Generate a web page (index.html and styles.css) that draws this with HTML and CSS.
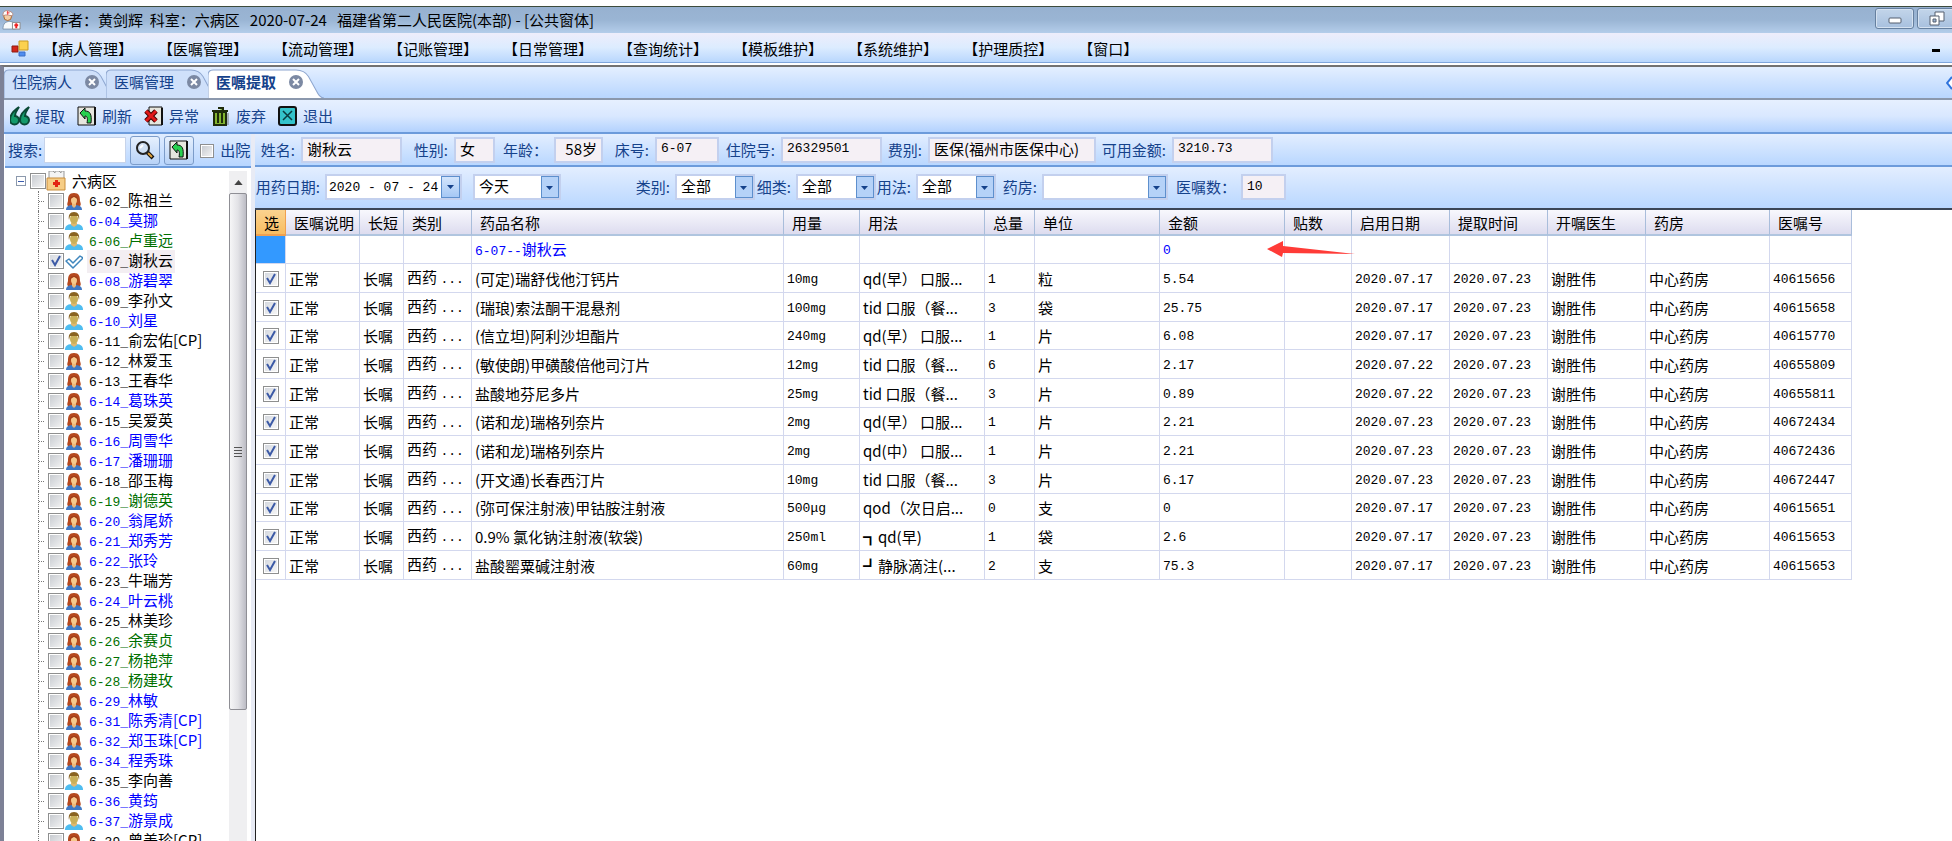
FILE: index.html
```html
<!DOCTYPE html>
<html lang="zh-CN">
<head>
    <meta charset="UTF-8">
    <meta name="viewport" content="width=device-width, initial-scale=1.0">
    <title>医嘱提取</title>
    <link rel="stylesheet" href="styles.css">
</head>
<body>
    <svg class="sprite" aria-hidden="true">
        <symbol id="i-female" viewBox="0 0 18 18">
            <path d="M3 14C2 13 2 12 3 9C3 4 4 1 9 1s6 3 6 8c1 3 1 4 0 5z" fill="#b5491f"/>
            <path d="M1 18c0-4 3-5 8-5s8 1 8 5z" fill="#3f78c4"/>
            <path d="M7 10h4v4l-2 2l-2-2z" fill="#eeb878"/>
            <ellipse cx="9" cy="8" rx="3" ry="4" fill="#f6c98c"/>
            <path d="M5 9c0-5 2-5 4-5s4 0 4 5c-1-3-2-3-4-4c-2 1-3 1-4 4z" fill="#a03d18"/>
        </symbol>
        <symbol id="i-male" viewBox="0 0 18 18">
            <path d="M0 18c0-5 3-6 9-6s9 1 9 6z" fill="#4fbdf0"/>
            <path d="M6 11h6v2l-3 2l-3-2z" fill="#e0b870"/>
            <ellipse cx="9" cy="7" rx="4" ry="5" fill="#c9b05a"/>
            <path d="M4 8c-1-5 1-8 5-8s6 3 5 8l-1-4H5z" fill="#8a6422"/>
        </symbol>
        <symbol id="i-tick" viewBox="0 0 18 18">
            <path d="M1 9l3-2l4 4l7-7l3 2l-10 10z" fill="#fff" stroke="#3f86bd" stroke-width="1.5" stroke-linejoin="round"/>
        </symbol>
        <symbol id="i-ward" viewBox="0 0 20 20">
            <path d="M3 0h4l2 2V0h4l2 2V0h3v9H3z" fill="#f4f4f4" stroke="#999"/>
            <path d="M1 7h18v12H1z" fill="#f6cd86" stroke="#c98e3c"/>
            <path d="M9 9h3v2h2v3h-2v2H9v-2H7v-3h2z" fill="#e32613"/>
        </symbol>
        <symbol id="i-refresh" viewBox="0 0 20 20">
            <path d="M1 1h17v18H1z" fill="#e6e6de" stroke="#111"/>
            <path d="M17 1h2v18h-2z" fill="#111"/>
            <path d="M3 7l5-5v3c5 0 7 3 6 12h-4c1-5 0-7-2-7v3z" fill="#27d04f" stroke="#111"/>
        </symbol>
        <symbol id="i-close" viewBox="0 0 16 16">
            <circle cx="8" cy="8" r="7" fill="#7c89a3"/>
            <path d="M5 5l6 6M11 5l-6 6" stroke="#fff" stroke-width="2"/>
        </symbol>
        <symbol id="i-tab" viewBox="0 0 112 27" preserveAspectRatio="none">
            <path d="M0 27V6Q0 1 5 1H85Q93 1 97 7L105 21Q108 27 112 27" stroke="#8ea6cf"/>
        </symbol>
    </svg>

    <header class="titlebar">
        <svg class="app-icon" viewBox="0 0 22 22">
            <path d="M2 20c0-6 3-8 7-8s6 2 6 8z" fill="#f7fafc" stroke="#7f97b0"/>
            <circle cx="7" cy="7" r="4" fill="#f3cda5" stroke="#a6642c"/>
            <path d="M2 6c0-4 2-6 6-5s5 3 4 5c-4 0-5-2-10 0z" fill="#fff" stroke="#b98b7c"/>
            <path d="M6 3h3M7 1v4" stroke="#e33"/>
            <path d="M12 13h8v7h-8z" fill="#fff" stroke="#888"/>
            <path d="M14 16h4M16 14v5" stroke="#e22" stroke-width="2"/>
        </svg>
        <h1>操作者：黄剑辉&nbsp; 科室：六病区&nbsp;&nbsp; 2020-07-24&nbsp;&nbsp; 福建省第二人民医院(本部) - [公共窗体]</h1>
        <div class="window-buttons">
            <button type="button" aria-label="最小化"><svg width="16" height="16" viewBox="0 0 16 16"><rect x="2" y="7" width="12" height="5" rx="1" fill="#fff" stroke="#555e6e"/></svg></button>
            <button type="button" aria-label="还原"><svg width="16" height="16" viewBox="0 0 16 16"><path d="M6 1h9v9H6z" fill="#fff" stroke="#555e6e"/><path d="M1 5h9v9H1z" fill="#fff" stroke="#555e6e"/><path d="M4 8h3v3H4z" fill="#9db6d4" stroke="#555e6e"/></svg></button>
        </div>
    </header>

    <nav class="menubar">
        <svg class="menu-icon" width="18" height="18" viewBox="0 0 18 18">
            <path d="M1 6h6v6H1z" fill="#d3261a" stroke="#8d1d13"/>
            <path d="M8 1h9v9H8z" fill="#fbd14e" stroke="#c99a22"/>
            <path d="M8 12h6v4H8z" fill="#4f8df0" stroke="#3c6fc4"/>
        </svg>
        <a href="#">【病人管理】</a>
        <a href="#">【医嘱管理】</a>
        <a href="#">【流动管理】</a>
        <a href="#">【记账管理】</a>
        <a href="#">【日常管理】</a>
        <a href="#">【查询统计】</a>
        <a href="#">【模板维护】</a>
        <a href="#">【系统维护】</a>
        <a href="#">【护理质控】</a>
        <a href="#">【窗口】</a>
        <span class="mdi-min"></span>
    </nav>

    <div class="workspace">
        <div class="tabs">
            <div class="tab"><svg class="tab-shape"><use href="#i-tab"/></svg><span>住院病人</span><svg class="tab-close"><use href="#i-close"/></svg></div>
            <div class="tab"><svg class="tab-shape"><use href="#i-tab"/></svg><span>医嘱管理</span><svg class="tab-close"><use href="#i-close"/></svg></div>
            <div class="tab active"><svg class="tab-shape"><use href="#i-tab"/></svg><span>医嘱提取</span><svg class="tab-close"><use href="#i-close"/></svg></div>
            <svg class="tab-scroll" width="6" height="14" viewBox="0 0 6 14"><path d="M6 1L1 7l5 6" fill="#fff" stroke="#2f74dd" stroke-width="2"/></svg>
        </div>

        <div class="toolbar">
            <button type="button"><svg viewBox="0 0 20 20"><path d="M9 1C3 5 0 9 0 14c0 6 9 6 9 0c0-3-3-4-4-4c0-4 2-6 4-9zM19 1c-6 4-9 8-9 13c0 6 9 6 9 0c0-3-3-4-4-4c0-4 2-6 4-9z" fill="#149a6b" stroke="#0b4a36" stroke-width="2"/></svg>提取</button>
            <button type="button"><svg><use href="#i-refresh"/></svg>刷新</button>
            <button type="button"><svg viewBox="0 0 20 20"><path d="M5 1h13v18H5z" fill="#e6e6de" stroke="#111"/><path d="M17 2h2v17h-2z" fill="#111"/><path d="M2 5l10 10M12 5L2 15" stroke="#400" stroke-width="5"/><path d="M2 5l10 10M12 5L2 15" stroke="#e01818" stroke-width="3"/></svg>异常</button>
            <button type="button"><svg viewBox="0 0 20 20"><path d="M1 5h16M7 2h5v3M3 6h12v13H3z" fill="#82b430" stroke="#1f2c0b" stroke-width="2"/><path d="M7 7v10M11 7v10" stroke="#1f2c0b" stroke-width="2"/><path d="M17 7v12" stroke="#777"/></svg>废弃</button>
            <button type="button"><svg viewBox="0 0 20 20"><rect x="1" y="1" width="17" height="18" rx="2" fill="#34c3cb" stroke="#111" stroke-width="2"/><path d="M5 5l9 9M14 5l-9 9" stroke="#0a3b40" stroke-width="1.5"/></svg>退出</button>
        </div>

        <main>
            <aside>
                <div class="search-row">
                    <label for="search">搜索:</label>
                    <input type="text" id="search">
                    <button type="button" aria-label="查找"><svg viewBox="0 0 20 20"><path d="M12 12l6 6" stroke="#111" stroke-width="4"/><path d="M13 13l4 4" stroke="#e2a33b" stroke-width="2"/><circle cx="8" cy="8" r="6" fill="#cfdff2" stroke="#222" stroke-width="2"/><path d="M5 8l3-3" stroke="#fff" stroke-width="2"/></svg></button>
                    <button type="button" aria-label="刷新"><svg><use href="#i-refresh"/></svg></button>
                    <input type="checkbox" id="discharged">
                    <label for="discharged">出院</label>
                </div>
                <div class="tree-wrap">
                    <div class="tree">
                        <div class="tree-root">
                            <button type="button" class="collapse" aria-label="折叠"></button>
                            <input type="checkbox" id="ward">
                            <svg><use href="#i-ward"/></svg>
                            <label for="ward">六病区</label>
                        </div>
                        <ul id="patientList"></ul>
                    </div>
                    <div class="scrollbar">
                        <span class="scroll-up"></span>
                        <span class="scroll-thumb"></span>
                        <span class="scroll-rest"></span>
                    </div>
                </div>
            </aside>

            <section class="content">
                <div class="info-row">
                    <label for="pName">姓名:</label><input type="text" id="pName" value="谢秋云" readonly>
                    <label for="pSex">性别:</label><input type="text" id="pSex" value="女" readonly>
                    <label for="pAge">年龄：</label><input type="text" id="pAge" class="right" value="58岁" readonly>
                    <label for="pBed">床号:</label><input type="text" id="pBed" class="num" value="6-07" readonly>
                    <label for="pNo">住院号:</label><input type="text" id="pNo" class="num" value="26329501" readonly>
                    <label for="pFee">费别:</label><input type="text" id="pFee" value="医保(福州市医保中心)" readonly>
                    <label for="pMoney">可用金额:</label><input type="text" id="pMoney" class="num" value="3210.73" readonly>
                </div>
                <div class="filter-row">
                    <label for="useDate">用药日期:</label>
                    <div class="date-box">
                        <input type="text" id="useDate" class="num" value="2020 - 07 - 24">
                        <button type="button" aria-label="选择日期"></button>
                    </div>
                    <select class="day" aria-label="日期范围"><option>今天</option></select>
                    <label for="fType">类别:</label><select id="fType"><option>全部</option></select>
                    <label for="fSub">细类:</label><select id="fSub"><option>全部</option></select>
                    <label for="fUsage">用法:</label><select id="fUsage"><option>全部</option></select>
                    <label for="fPharmacy">药房:</label><select id="fPharmacy"><option></option></select>
                    <label for="fCount">医嘱数：</label><input type="text" id="fCount" class="num" value="10" readonly>
                </div>
                <div class="grid">
                    <table>
                        <colgroup>
                            <col class="c-check"><col class="c-state"><col class="c-term"><col class="c-type">
                            <col class="c-drug"><col class="c-dose"><col class="c-usage"><col class="c-total">
                            <col class="c-unit"><col class="c-money"><col class="c-paste"><col class="c-date">
                            <col class="c-date"><col class="c-date"><col class="c-pharmacy"><col class="c-order">
                        </colgroup>
                        <thead>
                            <tr>
                                <th>选</th><th>医嘱说明</th><th>长短</th><th>类别</th><th>药品名称</th><th>用量</th><th>用法</th><th>总量</th>
                                <th>单位</th><th>金额</th><th>贴数</th><th>启用日期</th><th>提取时间</th><th>开嘱医生</th><th>药房</th><th>医嘱号</th>
                            </tr>
                        </thead>
                        <tbody id="orderList">
                            <tr class="group">
                                <td></td><td></td><td></td><td></td><td><span class="num">6-07--</span>谢秋云</td><td></td><td></td><td></td>
                                <td></td><td class="num">0</td><td></td><td></td><td></td><td></td><td></td><td></td>
                            </tr>
                        </tbody>
                    </table>
                    <svg class="arrow" width="88" height="18" viewBox="0 0 88 18"><path d="M0 8L16 0V5L88 13L16 12L15 16z" fill="#ff3b37"/></svg>
                </div>
            </section>
        </main>
    </div>

    <script>
        // [床号, 姓名, 性别, 颜色]
        const patients = [
            ['6-02', '陈祖兰', 'f', ''],
            ['6-04', '莫挪', 'm', 'blue'],
            ['6-06', '卢重远', 'm', 'green'],
            ['6-07', '谢秋云', 'f', 'selected'],
            ['6-08', '游碧翠', 'f', 'blue'],
            ['6-09', '李孙文', 'm', ''],
            ['6-10', '刘星', 'm', 'blue'],
            ['6-11', '俞宏佑[CP]', 'm', ''],
            ['6-12', '林爱玉', 'f', ''],
            ['6-13', '王春华', 'f', ''],
            ['6-14', '葛珠英', 'f', 'blue'],
            ['6-15', '吴爱英', 'f', ''],
            ['6-16', '周雪华', 'f', 'blue'],
            ['6-17', '潘珊珊', 'f', 'blue'],
            ['6-18', '邵玉梅', 'f', ''],
            ['6-19', '谢德英', 'f', 'green'],
            ['6-20', '翁尾娇', 'f', 'blue'],
            ['6-21', '郑秀芳', 'f', 'blue'],
            ['6-22', '张玲', 'f', 'blue'],
            ['6-23', '牛瑞芳', 'f', ''],
            ['6-24', '叶云桃', 'f', 'blue'],
            ['6-25', '林美珍', 'f', ''],
            ['6-26', '余赛贞', 'f', 'green'],
            ['6-27', '杨艳萍', 'f', 'green'],
            ['6-28', '杨建玫', 'f', 'green'],
            ['6-29', '林敏', 'f', 'blue'],
            ['6-31', '陈秀清[CP]', 'f', 'blue'],
            ['6-32', '郑玉珠[CP]', 'f', 'blue'],
            ['6-34', '程秀珠', 'f', 'blue'],
            ['6-35', '李向善', 'm', ''],
            ['6-36', '黄筠', 'f', 'blue'],
            ['6-37', '游景成', 'm', 'blue'],
            ['6-39', '曾美珍[CP]', 'f', '']
        ];

        const orders = [
            ['(可定)瑞舒伐他汀钙片', '10mg', 'qd(早） 口服...', '1', '粒', '5.54', '2020.07.17', '40615656'],
            ['(瑞琅)索法酮干混悬剂', '100mg', 'tid 口服（餐...', '3', '袋', '25.75', '2020.07.17', '40615658'],
            ['(信立坦)阿利沙坦酯片', '240mg', 'qd(早） 口服...', '1', '片', '6.08', '2020.07.17', '40615770'],
            ['(敏使朗)甲磺酸倍他司汀片', '12mg', 'tid 口服（餐...', '6', '片', '2.17', '2020.07.22', '40655809'],
            ['盐酸地芬尼多片', '25mg', 'tid 口服（餐...', '3', '片', '0.89', '2020.07.22', '40655811'],
            ['(诺和龙)瑞格列奈片', '2mg', 'qd(早） 口服...', '1', '片', '2.21', '2020.07.23', '40672434'],
            ['(诺和龙)瑞格列奈片', '2mg', 'qd(中） 口服...', '1', '片', '2.21', '2020.07.23', '40672436'],
            ['(开文通)长春西汀片', '10mg', 'tid 口服（餐...', '3', '片', '6.17', '2020.07.23', '40672447'],
            ['(弥可保注射液)甲钴胺注射液', '500μg', 'qod（次日启...', '0', '支', '0', '2020.07.17', '40615651'],
            ['0.9% 氯化钠注射液(软袋)', '250ml', '┓qd(早)', '1', '袋', '2.6', '2020.07.17', '40615653'],
            ['盐酸罂粟碱注射液', '60mg', '┛静脉滴注(...', '2', '支', '75.3', '2020.07.17', '40615653']
        ];

        const patientList = document.getElementById('patientList');
        patients.forEach(([bed, name, sex, state]) => {
            const selected = state === 'selected';
            const icon = selected ? 'i-tick' : (sex === 'f' ? 'i-female' : 'i-male');
            const li = document.createElement('li');
            li.className = state;
            li.innerHTML = `<span class="branch"></span>
                <input type="checkbox" id="bed${bed}" ${selected ? 'checked' : ''}>
                <svg><use href="#${icon}"/></svg>
                <label for="bed${bed}"><span class="num">${bed}_</span>${name}</label>`;
            patientList.appendChild(li);
        });

        const orderList = document.getElementById('orderList');
        orders.forEach(([drug, dose, usage, total, unit, money, start, no]) => {
            const tr = document.createElement('tr');
            tr.innerHTML = `<td class="check"><input type="checkbox" aria-label="${drug}" checked></td>
                <td>正常</td><td>长嘱</td><td>西药 <span class="num">...</span></td><td>${drug}</td><td class="num">${dose}</td>
                <td>${usage}</td><td class="num">${total}</td><td>${unit}</td><td class="num">${money}</td><td></td>
                <td class="num">${start}</td><td class="num">2020.07.23</td><td>谢胜伟</td><td>中心药房</td><td class="num">${no}</td>`;
            orderList.appendChild(tr);
        });
    </script>
</body>
</html>
```
FILE: styles.css
```css
* {
    box-sizing: border-box;
}
body {
    margin: 0;
    padding-top: 6px;
    height: 100vh;
    display: flex;
    flex-direction: column;
    overflow: hidden;
    background-color: #fff;
    color: #000;
    font-family: "Noto Sans CJK SC", sans-serif;
    font-size: 15px;
    line-height: 20px;
}
input, select, button {
    font: inherit;
    color: inherit;
    margin: 0;
}
.num, input.num {
    font-family: "Liberation Mono", "Noto Sans CJK SC", monospace;
    font-size: 13px;
}
.sprite {
    display: none;
}

/* 标题栏 */
.titlebar {
    display: flex;
    align-items: center;
    height: 27px;
    padding-left: 1px;
    border-top: 1px solid #3d4b3c;
    background: linear-gradient(#97b1d0, #9ab5d4 50%, #b4cdea);
}
.app-icon {
    width: 21px;
    height: 21px;
}
.titlebar h1 {
    margin: 0 0 0 16px;
    font-size: 15px;
    font-weight: normal;
}
.window-buttons {
    display: flex;
    gap: 3px;
    margin-left: auto;
    margin-top: 1px;
    align-self: flex-start;
    margin-right: -4px;
}
.window-buttons button {
    display: flex;
    align-items: center;
    justify-content: center;
    width: 39px;
    height: 21px;
    padding: 0;
    border: 1px solid #66809f;
    border-radius: 3px;
    background: linear-gradient(#c3d5ea, #a7c0de);
    box-shadow: inset 0 0 0 1px #d5e2f1;
}

/* 菜单栏 */
.menubar {
    display: flex;
    align-items: center;
    gap: 25px;
    height: 30px;
    padding: 2px 12px 0 11px;
    border-bottom: 1px solid #7fa6dc;
    background: linear-gradient(#eeedfb, #dcecff 50%, #b9d7fd);
}
.menu-icon {
    margin-right: -11px;
}
.menubar a {
    color: #000;
    text-decoration: none;
}
.mdi-min {
    width: 8px;
    height: 3px;
    margin-left: auto;
    margin-top: 4px;
    background-color: #000;
}
.workspace {
    flex: 1;
    min-height: 0;
    display: flex;
    flex-direction: column;
    margin-top: 2px;
    border-top: 2px solid #727272;
    border-left: 4px solid #7d8196;
}

/* 页签 */
.tabs {
    display: flex;
    align-items: flex-end;
    height: 33px;
    border-bottom: 2px solid #8b98ad;
    background: linear-gradient(#e4efff, #b8d6ff);
}
.tab {
    position: relative;
    display: flex;
    align-items: center;
    gap: 12px;
    height: 29px;
    padding: 0 16px 4px 8px;
    margin-right: -10px;
    color: #15428b;
}
.tab-shape {
    position: absolute;
    inset: 0;
    width: 100%;
    height: 100%;
    fill: #cfe0fa;
}
.tab span, .tab-close {
    position: relative;
}
.tab-close {
    width: 16px;
    height: 16px;
}
.tab.active {
    font-weight: bold;
    padding-right: 20px;
}
.tab.active .tab-shape {
    fill: #fff;
}
.tab-scroll {
    margin: 0 0 8px auto;
}

/* 工具栏 */
.toolbar {
    display: flex;
    align-items: center;
    gap: 12px;
    height: 34px;
    padding-left: 6px;
    border-bottom: 2px solid #6c9bdb;
    background: linear-gradient(#e6f0ff, #d9e8ff 50%, #b3d2fe);
}
.toolbar button {
    display: flex;
    align-items: center;
    gap: 5px;
    padding: 0;
    border: 0;
    background: none;
    color: #15428b;
}
.toolbar svg, .search-row svg {
    width: 20px;
    height: 20px;
}
main {
    flex: 1;
    min-height: 0;
    display: flex;
}

/* 病人树 */
aside {
    display: flex;
    flex-direction: column;
    width: 251px;
    padding-left: 1px;
    border-right: 4px solid #e8ebf5;
    box-shadow: inset -1px 0 #7f88a8;
}
.search-row {
    display: flex;
    align-items: center;
    height: 34px;
    padding-left: 3px;
    overflow: hidden;
    white-space: nowrap;
    border-bottom: 2px solid #6c9bdb;
    background: linear-gradient(#e0edff, #b8d6ff);
    color: #15428b;
}
.search-row input[type="text"] {
    width: 82px;
    height: 26px;
    margin-left: 2px;
    border: 1px solid #c6d3ea;
    background-color: #fff;
}
.search-row button {
    display: flex;
    align-items: center;
    justify-content: center;
    width: 30px;
    height: 29px;
    margin-left: 4px;
    padding: 0;
    border: 1px solid #7c9cc9;
    border-radius: 3px;
    background: linear-gradient(#e6f0fd, #b7d2f7);
}
input[type="checkbox"] {
    appearance: none;
    flex: none;
    width: 16px;
    height: 16px;
    border: 1px solid #8e8f8f;
    outline: 1px solid #fff;
    outline-offset: -2px;
    background: linear-gradient(135deg, #c4c8ce, #f6f6f6);
}
.search-row input[type="checkbox"] {
    width: 14px;
    height: 14px;
    margin: 2px 6px 0;
}
input[type="checkbox"]:checked {
    background: url("data:image/svg+xml,%3Csvg xmlns='http://www.w3.org/2000/svg' viewBox='0 0 14 14'%3E%3Cpath d='M3 6l3 5l5-9' fill='none' stroke='%233c5aa6' stroke-width='2'/%3E%3C/svg%3E") center / 14px 14px no-repeat, linear-gradient(135deg, #d3d7de, #f8f8f8);
}
.tree-wrap {
    flex: 1;
    min-height: 0;
    display: flex;
    padding: 3px 4px 0 0;
    background-color: #fff;
}
.tree {
    flex: 1;
    overflow: hidden;
    white-space: nowrap;
}
.tree-root, .tree li {
    display: flex;
    align-items: center;
    height: 20px;
}
.tree-root {
    padding-left: 11px;
}
.tree-root svg {
    width: 20px;
    height: 20px;
    margin-right: 6px;
}
.collapse {
    width: 10px;
    height: 10px;
    margin-right: 4px;
    padding: 0;
    border: 1px solid #8c99ad;
    background: linear-gradient(#3b5cae, #3b5cae) center / 6px 1px no-repeat, #fff;
}
.tree ul {
    list-style: none;
    margin: 0;
    padding: 0 0 0 33px;
}
.branch {
    align-self: stretch;
    width: 10px;
    border-left: 1px dotted #777;
}
.branch::before {
    content: "";
    display: block;
    width: 5px;
    height: 10px;
    border-bottom: 1px dotted #777;
}
.tree li svg {
    width: 18px;
    height: 18px;
    margin: 0 4px 0 1px;
}
.tree li label {
    padding: 0 2px;
}
.tree .blue {
    color: #0000ff;
}
.tree .green {
    color: #007000;
}
.tree .selected label {
    background-color: #f3eef2;
}
.scrollbar {
    display: flex;
    flex-direction: column;
    width: 18px;
    background-color: #efeff1;
}
.scroll-up {
    height: 22px;
    background: url("data:image/svg+xml,%3Csvg xmlns='http://www.w3.org/2000/svg' viewBox='0 0 10 6'%3E%3Cpath d='M0 6l5-6l5 6z' fill='%23444'/%3E%3C/svg%3E") center / 9px 5px no-repeat;
}
.scroll-thumb {
    flex: 516;
    border: 1px solid #8f8f95;
    border-radius: 2px;
    background: repeating-linear-gradient(#555 0 1px, transparent 1px 3px) center / 8px 10px no-repeat, linear-gradient(90deg, #f6f6f7, #e2e2e6 50%, #bcbcc4);
}
.scroll-rest {
    flex: 131;
}

/* 病人信息与筛选 */
.content {
    flex: 1;
    min-width: 0;
    display: flex;
    flex-direction: column;
}
.info-row, .filter-row {
    display: grid;
    align-items: center;
    color: #15428b;
    white-space: nowrap;
    background: linear-gradient(#e3eeff, #b9d7ff);
}
.info-row {
    grid-template-columns: 46px 101px 52px 41px 59px 49px 52px 64px 62px 101px 46px 168px 76px 101px;
    height: 33px;
    border-bottom: 2px solid #6c9bdb;
}
.filter-row {
    grid-template-columns: 70px 137px 99px 114px 80px 41px 80px 40px 80px 46px 126px 73px 45px;
    height: 43px;
    padding-bottom: 1px;
    border-bottom: 2px solid #3b4657;
}
.info-row label, .filter-row label {
    padding-right: 6px;
    text-align: right;
}
.filter-row label {
    padding-right: 5px;
}
.content input[type="text"], .content select {
    width: 100%;
    height: 26px;
    padding: 0 4px 2px;
    border: 2px solid #c3d0ee;
    background-color: #f5f0f5;
    color: #000;
}
.content .right {
    text-align: right;
}
.content select {
    appearance: none;
    border-radius: 0;
    background: url("data:image/svg+xml,%3Csvg xmlns='http://www.w3.org/2000/svg' viewBox='0 0 18 22'%3E%3Crect x='.5' y='.5' width='17' height='21' fill='%23b5d2f8' stroke='%235d8fcd'/%3E%3Cpath d='M5 10h7l-3.5 4z' fill='%2315428b'/%3E%3C/svg%3E") right 0 center / 18px 22px no-repeat, #fff;
}
.content .day {
    width: 88px;
    justify-self: end;
}
.date-box {
    display: flex;
    border: 2px solid #c3d0ee;
    background-color: #fff;
}
.content .date-box input {
    flex: 1;
    min-width: 0;
    height: 22px;
    padding: 0 2px;
    border: 0;
    background-color: #fff;
}
.date-box button {
    width: 19px;
    border: 1px solid #5d8fcd;
    background: url("data:image/svg+xml,%3Csvg xmlns='http://www.w3.org/2000/svg' viewBox='0 0 7 4'%3E%3Cpath d='M0 0h7l-3.5 4z' fill='%2315428b'/%3E%3C/svg%3E") center / 7px 4px no-repeat, linear-gradient(#d3e5fc, #a5c8f5);
}

/* 医嘱表格 */
.grid {
    position: relative;
    flex: 1;
    overflow: hidden;
    border-left: 1px solid #222;
    background-color: #fff;
}
table {
    width: 1596px;
    table-layout: fixed;
    border-collapse: separate;
    border-spacing: 0;
}
.c-check { width: 30px; }
.c-state { width: 74px; }
.c-term { width: 44px; }
.c-type { width: 68px; }
.c-drug { width: 312px; }
.c-dose { width: 76px; }
.c-usage { width: 125px; }
.c-total { width: 50px; }
.c-unit, .c-money { width: 125px; }
.c-paste { width: 67px; }
.c-date { width: 98px; }
.c-pharmacy { width: 124px; }
.c-order { width: 82px; }
th, td {
    padding: 1px 0 0 3px;
    text-align: left;
    font-weight: normal;
    white-space: nowrap;
    overflow: hidden;
    border-right: 1px solid #d3d8ee;
    border-bottom: 1px solid #d3d8ee;
}
th {
    height: 26px;
    padding-left: 8px;
    border-right-color: #a9bddb;
    border-bottom: 2px solid #b0c5df;
    background: linear-gradient(#f8f8fd, #dddcef);
}
th:first-child {
    border-color: #f0a050;
    background: linear-gradient(#fbd38f, #f8bd62);
}
td {
    height: 29px;
}
td.num {
    padding-top: 3px;
}
tbody tr:nth-child(3n+1) td {
    height: 28px;
}
.group {
    color: #0000ff;
}
.group td:first-child {
    background-color: #3399ff;
}
.check input {
    display: block;
    margin-left: 4px;
}
.arrow {
    position: absolute;
    left: 1011px;
    top: 31px;
}
```
